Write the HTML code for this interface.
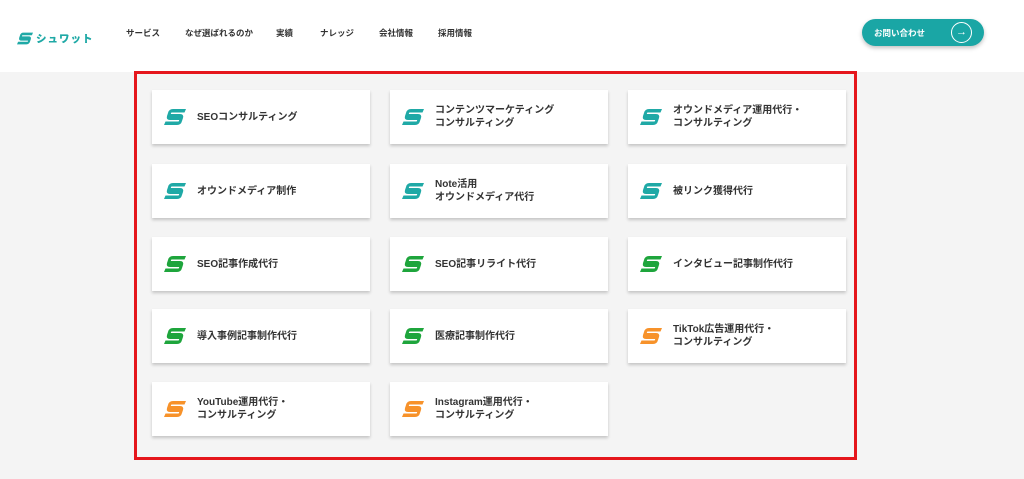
<!DOCTYPE html>
<html><head><meta charset="utf-8"><style>
*{margin:0;padding:0;box-sizing:border-box}
body{width:1024px;height:479px;overflow:hidden;background:#f4f4f4;font-family:"Liberation Sans","Noto Sans CJK JP",sans-serif;position:relative}
header{position:absolute;left:0;top:0;width:1024px;height:72px;background:#fff}
.logo{position:absolute;left:17px;top:31px;display:flex;align-items:center;gap:3px;color:#1fa9a6;font-weight:900;font-size:10.5px;letter-spacing:1px}
nav a{position:absolute;top:27px;font-size:8.5px;color:#333;font-weight:bold}
.btn{position:absolute;left:862px;top:19px;width:122px;height:27px;border-radius:14px;background:#1aa6a5;box-shadow:0 2px 4px rgba(0,0,0,.25);color:#fff;font-size:8.5px;font-weight:bold;padding:8px 0 0 12px}
.btn .c{position:absolute;right:12px;top:3px;width:21px;height:21px;border:1px solid #fff;border-radius:50%;text-align:center;line-height:19px;font-size:11px;font-weight:normal}
.frame{position:absolute;left:134px;top:71px;width:723px;height:389px;border:3px solid #e5161c}
.card{position:absolute;width:218px;height:54px;background:#fff;box-shadow:0 2px 3px rgba(0,0,0,.2);display:flex;align-items:center;padding-left:12px}
.card svg{flex:none;margin-right:11px}
.card span{font-size:10px;font-weight:bold;color:#333;line-height:13px}
</style></head><body>
<header>
<div class="logo"><svg width="16" height="13" viewBox="0 0 22 16"><path fill="#1fa9a6" d="M9 0H22L20.5 3.5H8Q6.5 3.5 7 5H16Q20 5 19 9L18 12Q17 16 13 16H0L1.5 12.5H14Q15.5 12.5 15 11H6Q2 11 3 7L4 4Q5 0 9 0Z"/></svg>シュワット</div>
<nav><a style="left:126px">サービス</a><a style="left:185px">なぜ選ばれるのか</a><a style="left:276px">実績</a><a style="left:320px">ナレッジ</a><a style="left:379px">会社情報</a><a style="left:438px">採用情報</a></nav>
<div class="btn">お問い合わせ<div class="c">→</div></div>
</header>
<div class="frame"></div>
<div id="cards"></div>
<script>
var T="#1fa9a6",G="#1ea53c",O="#f7922a";
var d=[["SEOコンサルティング",T],["コンテンツマーケティング<br>コンサルティング",T],["オウンドメディア運用代行・<br>コンサルティング",T],
["オウンドメディア制作",T],["Note活用<br>オウンドメディア代行",T],["被リンク獲得代行",T],
["SEO記事作成代行",G],["SEO記事リライト代行",G],["インタビュー記事制作代行",G],
["導入事例記事制作代行",G],["医療記事制作代行",G],["TikTok広告運用代行・<br>コンサルティング",O],
["YouTube運用代行・<br>コンサルティング",O],["Instagram運用代行・<br>コンサルティング",O]];
var xs=[152,390,628],ys=[90,164,237,309,382],h="";
d.forEach(function(e,i){h+='<div class="card" style="left:'+xs[i%3]+'px;top:'+ys[Math.floor(i/3)]+'px"><svg width="22" height="16" viewBox="0 0 22 16"><path fill="'+e[1]+'" d="M9 0H22L20.5 3.5H8Q6.5 3.5 7 5H16Q20 5 19 9L18 12Q17 16 13 16H0L1.5 12.5H14Q15.5 12.5 15 11H6Q2 11 3 7L4 4Q5 0 9 0Z"/></svg><span>'+e[0]+'</span></div>';});
document.getElementById("cards").innerHTML=h;
</script>
</body></html>
